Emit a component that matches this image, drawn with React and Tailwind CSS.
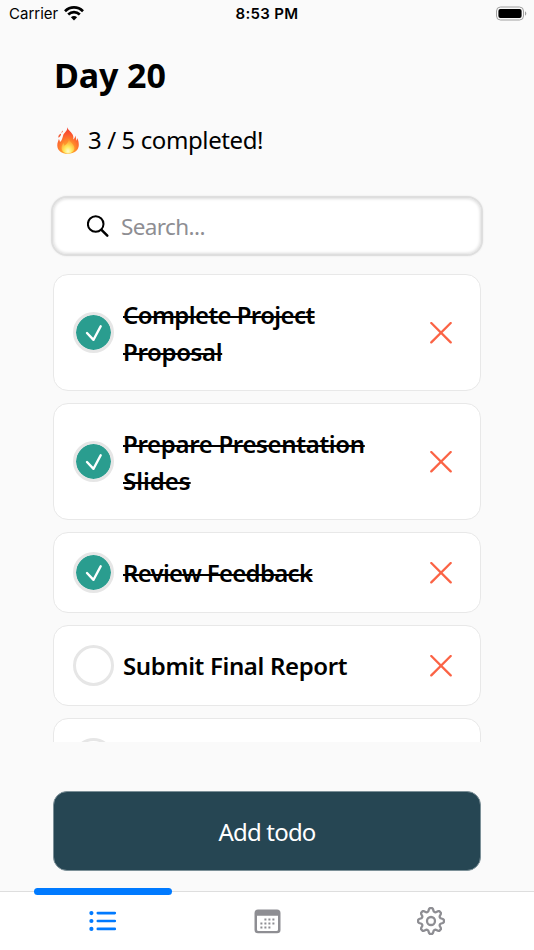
const todos = [
  { lines: [["Complete Project", "tracking-[-0.6px]"], ["Proposal", "tracking-[-0.35px]"]], done: true },
  { lines: [["Prepare Presentation", "tracking-[-0.33px]"], ["Slides", "tracking-[0px]"]], done: true },
  { lines: [["Review Feedback", "tracking-[-0.7px]"]], done: true },
  { lines: [["Submit Final Report", "tracking-[-0.35px]"]], done: false },
  { lines: [["", ""]], done: false },
];

const gearPoints = Array.from({ length: 8 }, (_, k) =>
  [[-16, 9.9], [-9.5, 12.1], [-5, 12.9], [5, 12.9], [9.5, 12.1], [16, 9.9], [22.5, 9.5]].map(([offset, r]) => {
    const a = ((k * 45 + offset - 90) * Math.PI) / 180;
    return `${(14 + r * Math.cos(a)).toFixed(2)},${(14 + r * Math.sin(a)).toFixed(2)}`;
  }).join(" ")
).join(" ");

function StatusBar() {
  return (
    <div className="grid h-[28px] grid-cols-3 items-center px-[9px] font-['Inter',sans-serif] text-[15px] leading-[28px]">
      <div className="flex items-center gap-[6px]">
        <span className="tracking-[0px]">Carrier</span>
        <svg className="-mt-[2px] h-[15px] w-[20px]" viewBox="0 0 20 15" fill="none" stroke="black" strokeWidth="2.7">
          <path d="M1 5.2C6.2.2 13.8.2 19 5.2" />
          <path d="M4.2 8.5C7.6 5.3 12.4 5.3 15.8 8.5" />
          <path d="M10 14.5 6.9 11.3C8.7 9.6 11.3 9.6 13.1 11.3Z" fill="black" stroke="none" />
        </svg>
      </div>
      <div className="text-center font-semibold whitespace-nowrap tracking-[0.3px]">8:53 PM</div>
      <svg className="-mt-[2px] -mr-[2px] h-[15px] w-[32px] justify-self-end" viewBox="0 0 32 15">
        <rect x="1.5" y="1" width="27" height="13" rx="4" fill="none" stroke="#a0a0a0" />
        <rect x="3.4" y="2.9" width="23.2" height="9.2" rx="2" />
        <path d="M30 5.3c1.8.7 1.8 3.7 0 4.4Z" fill="#a0a0a0" />
      </svg>
    </div>
  );
}

function Fire() {
  return (
    <svg className="h-[27px] w-[22px] shrink-0" viewBox="0 0 22 27">
      <defs>
        <radialGradient id="flame" cx="0.5" cy="0.88" r="0.85">
          <stop offset="0" stopColor="#ffc52e" />
          <stop offset="0.42" stopColor="#ff8a2b" />
          <stop offset="0.75" stopColor="#fb5530" />
          <stop offset="1" stopColor="#ef3d2e" />
        </radialGradient>
        <radialGradient id="core" cx="0.5" cy="0.85" r="0.75">
          <stop offset="0" stopColor="#fffbd0" />
          <stop offset="0.4" stopColor="#ffe95c" />
          <stop offset="1" stopColor="#ff952c" />
        </radialGradient>
      </defs>
      <path fill="url(#flame)" d="M10.4.2c.4 2.8 3.6 4.4 5.2 7.2.9 1.7.9 3.3.6 5 1.4-.9 2-2.1 2-3.9 1 2 .7 3.8 1.4 5.2.4-.8.7-1.5.6-2.6 1.1 2.1 1.6 4.2 1.6 7 0 5.1-4.3 8.7-10.8 8.7S.3 23.4.3 18.4c0-2.5 1-4.3 1.6-6.3.5.6.9 1.6 1.1 2.9 2-1.5 2.4-4.3 3.2-6.8C7 5.5 10.3 4.4 10.4.2Z" />
      <path fill="#f15a35" d="M1.5 10.8c-.7-2 .7-3.5 2.6-4.3.2 1.9-1.2 3.1-2.6 4.3ZM4.6 6.2c-.1-1.2.4-2 1.1-2.6.2 1.1-.2 2-1.1 2.6Z" />
      <path fill="url(#core)" d="M11.8 11.5c.1 2.9 5.6 5.2 5.6 9.6 0 3.2-2.8 5.3-6.4 5.3s-6.4-2-6.4-5.3c0-2.2 1.1-3.5 1.5-5 .9.7 1.3 1.6 1.2 2.6 2.4-1.5 4.5-3.5 4.5-7.2Z" />
    </svg>
  );
}

function Check({ done }) {
  return (
    <div className={"flex h-[41px] w-[41px] shrink-0 items-center justify-center rounded-full border-[3px] border-[#e6e6e6] " + (done ? "bg-[#2a9d8f] bg-clip-padding" : "")}>
      {done && (
        <svg className="h-[18px] w-[18px]" viewBox="0 0 18 18" fill="none" stroke="white" strokeWidth="2.4" strokeLinecap="round" strokeLinejoin="round">
          <path d="M2 9 8.5 15.8 15.7 2.2" />
        </svg>
      )}
    </div>
  );
}

function Todo({ todo }) {
  const tall = todo.lines.length > 1;
  return (
    <div className={"flex shrink-0 items-center rounded-[15px] border border-[#e8e8e8] bg-white pr-[28.5px] pl-[19px] " + (tall ? "h-[117px]" : "h-[81px]")}>
      <Check done={todo.done} />
      <div className="ml-[9px] flex-1 pt-[1px] text-[24px] leading-[37.5px] font-semibold">
        {todo.lines.map(([text, tracking]) => (
          <div key={text} className={"whitespace-nowrap " + tracking}>
            <span className={todo.done ? "underline decoration-2 underline-offset-[-8px] [text-decoration-skip-ink:none]" : ""}>{text}</span>
          </div>
        ))}
      </div>
      <svg className="h-[22px] w-[22px] shrink-0" viewBox="0 0 22 22" stroke="#fb6345" strokeWidth="2.3" strokeLinecap="round">
        <path d="M1.3 1 20.7 20.4M20.7 1 1.3 20.4" />
      </svg>
    </div>
  );
}

function TabBar() {
  return (
    <nav className="relative grid h-[59px] grid-cols-[205px_124px_205px] items-center justify-items-center border-t border-[#dedede] bg-white">
      <div className="absolute -top-[4px] left-[34px] h-[7px] w-[138px] rounded-full bg-[#007aff]" />
      <svg className="h-[22px] w-[28px]" viewBox="0 0 28 22" stroke="#007aff" strokeWidth="2.6" strokeLinecap="round">
        <path d="M8.8 3.1H25.8M8.8 11H25.8M8.8 18.9H25.8" />
        <path strokeWidth="4.2" d="M2.4 3.1h.01M2.4 11h.01M2.4 18.9h.01" />
      </svg>
      <svg className="h-[25px] w-[27px]" viewBox="0 0 27 25" fill="#8e8e93">
        <path fillRule="evenodd" d="M4 .5H23Q26.5.5 26.5 4V21Q26.5 24.3 23 24.3H4Q.5 24.3.5 21V4Q.5.5 4 .5ZM3 6.8V20.5Q3 22 4.5 22H22.5Q24 22 24 20.5V6.8Z" />
        <path fill="none" stroke="#8e8e93" strokeWidth="2" strokeDasharray="2 2" d="M10.4 10.4H21M6.4 14.4H21M6.4 18.4H17.5" />
      </svg>
      <svg className="h-[29px] w-[29px]" viewBox="0 0 29 29" fill="none" stroke="#8e8e93" strokeWidth="2.3" strokeLinejoin="round">
        <polygon points={gearPoints} />
        <circle cx="14" cy="14" r="4" />
      </svg>
    </nav>
  );
}

export default function App() {
  return (
    <div className="flex h-[950px] w-[534px] flex-col overflow-hidden bg-[#fafafa] font-['Noto_Sans',sans-serif] text-black">
      <StatusBar />
      <header className="px-[54px] pt-[21px]">
        <h1 className="h-[52px] text-[34px] leading-[52px] font-bold whitespace-nowrap tracking-[-0.1px]">Day 20</h1>
        <div className="mt-[20px] flex h-[38px] items-center gap-[9px] pl-[3px] text-[24px] leading-[38px] whitespace-nowrap">
          <Fire />
          <span className="tracking-[-0.4px]">3 / 5 completed!</span>
        </div>
      </header>
      <div className="mx-[51px] mt-[37px] flex h-[60px] shrink-0 items-center rounded-[16px] border-2 border-[#dedede] bg-white pl-[34px] shadow-[inset_0_0_3px_1px_#dedede,0_0_2px_#e4e4e4]">
        <svg className="h-[23px] w-[23px]" viewBox="0 0 23 23" fill="none" stroke="black" strokeWidth="2" strokeLinecap="round">
          <circle cx="8.7" cy="9" r="7.8" />
          <path d="M14.5 14.8 20.3 20.6" strokeWidth="2.5" />
        </svg>
        <span className="ml-[11px] pt-[2px] text-[22.5px] leading-[34px] tracking-[-0.6px] text-[#8e8e93]">Search...</span>
      </div>
      <main className="mx-[53px] mt-[18px] flex h-[468px] shrink-0 flex-col gap-[12px] overflow-hidden">
        {todos.map((todo, i) => <Todo key={i} todo={todo} />)}
      </main>
      <button className="mx-[53px] mt-[49px] mb-[20px] h-[80px] shrink-0 rounded-[14px] border border-[#7c9098] bg-[#264653] pt-[2px] text-[24px] tracking-[-0.8px] text-white">Add todo</button>
      <TabBar />
    </div>
  );
}
